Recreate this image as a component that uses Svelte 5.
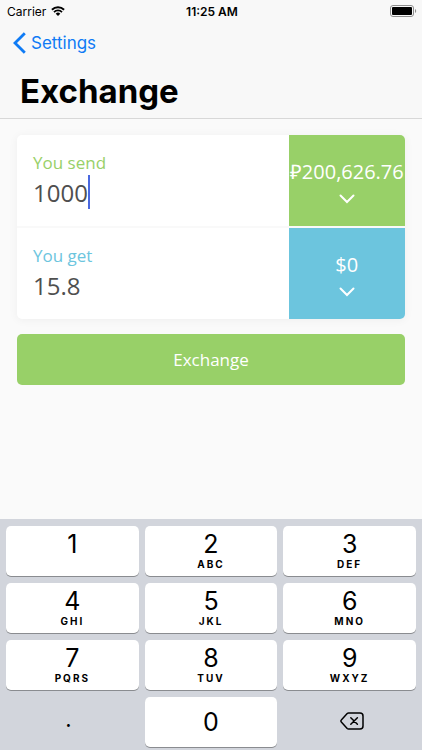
<script>
  let send = $state('1000');
  let get = $state('15.8');

  const keys = [
    { digit: '1', letters: '' },
    { digit: '2', letters: 'ABC' },
    { digit: '3', letters: 'DEF' },
    { digit: '4', letters: 'GHI' },
    { digit: '5', letters: 'JKL' },
    { digit: '6', letters: 'MNO' },
    { digit: '7', letters: 'PQRS' },
    { digit: '8', letters: 'TUV' },
    { digit: '9', letters: 'WXYZ' }
  ];

  function press(char) {
    send += char;
  }

  function backspace() {
    send = send.slice(0, -1);
  }
</script>

<div class="screen">
  <header>
    <div class="status-bar">
      <div class="carrier">
        <span>Carrier</span>
        <svg width="14" height="10" viewBox="0 0 14 10" aria-hidden="true">
          <path d="M0.9 3.8a8.7 8.7 0 0 1 12.2 0" fill="none" stroke="#000" stroke-width="1.9" />
          <path d="M3 6.1a5.7 5.7 0 0 1 8 0" fill="none" stroke="#000" stroke-width="1.8" />
          <path d="M7 10 4.7 7.7a3.3 3.3 0 0 1 4.6 0z" />
        </svg>
      </div>
      <span class="time">11:25 AM</span>
      <div class="battery">
        <svg width="27" height="12" viewBox="0 0 27 12" aria-hidden="true">
          <rect x="0.5" y="0.5" width="23" height="11" rx="2.5" fill="none" stroke="#8e8e8e" />
          <rect x="2" y="2" width="20" height="8" rx="1" />
          <path d="M25 4c1.6 0.6 1.6 3.4 0 4z" fill="#8e8e8e" />
        </svg>
      </div>
    </div>
    <a class="back" href="#settings">
      <svg width="13" height="22" viewBox="0 0 13 22" aria-hidden="true">
        <path d="M11.8 1.2 2 11l9.8 9.8" fill="none" stroke="#0f7bf5" stroke-width="2.8" />
      </svg>
      <span>Settings</span>
    </a>
    <h1>Exchange</h1>
  </header>

  <main>
    <div class="card">
      <div class="row send">
        <div class="field">
          <label for="send">You send</label>
          <div class="amount">
            <input id="send" inputmode="decimal" bind:value={send} style:width="{send.length}ch" />
            <span class="caret"></span>
          </div>
        </div>
        <button class="currency">
          <span>₽200,626.76</span>
          <svg width="16" height="10" viewBox="0 0 16 10" aria-hidden="true">
            <path d="M1.5 1.5 8 8l6.5-6.5" />
          </svg>
        </button>
      </div>
      <div class="row get">
        <div class="field">
          <label for="get">You get</label>
          <div class="amount">
            <input id="get" inputmode="decimal" bind:value={get} />
          </div>
        </div>
        <button class="currency">
          <span>$0</span>
          <svg width="16" height="10" viewBox="0 0 16 10" aria-hidden="true">
            <path d="M1.5 1.5 8 8l6.5-6.5" />
          </svg>
        </button>
      </div>
    </div>
    <button class="submit">Exchange</button>
  </main>

  <div class="keyboard">
    {#each keys as key}
      <button class="key" onclick={() => press(key.digit)}>
        <span class="digit">{key.digit}</span>
        <span class="letters">{key.letters}</span>
      </button>
    {/each}
    <button class="key plain point" onclick={() => press('.')}>.</button>
    <button class="key zero" onclick={() => press('0')}>
      <span class="digit">0</span>
    </button>
    <button class="key plain delete" aria-label="Delete" onclick={backspace}>
      <svg width="24" height="18" viewBox="0 0 24 18" aria-hidden="true">
        <path d="M8.6 1H20a3 3 0 0 1 3 3v10a3 3 0 0 1-3 3H8.6a2 2 0 0 1-1.4-0.6L1.3 10a1.4 1.4 0 0 1 0-2l5.9-6.4A2 2 0 0 1 8.6 1z" />
        <path d="m10.8 5.7 6.6 6.6m0-6.6-6.6 6.6" />
      </svg>
    </button>
  </div>
</div>

<style>
  :global(body) {
    margin: 0;
  }

  .screen {
    display: flex;
    flex-direction: column;
    min-height: 100vh;
    background: #fafafa;
    font-family: Inter, sans-serif;
    color: #000;
  }

  button,
  input {
    margin: 0;
    padding: 0;
    border: none;
    background: none;
    font-family: inherit;
    color: inherit;
  }

  button {
    cursor: pointer;
  }

  header {
    background: #f8f8f8;
    border-bottom: 1px solid #d8d8d8;
  }

  .status-bar {
    display: grid;
    grid-template-columns: 1fr auto 1fr;
    align-items: center;
    height: 22px;
    padding: 0 5px 0 7px;
    font-size: 12px;
  }

  .carrier {
    display: flex;
    align-items: center;
    gap: 5px;
  }

  .time {
    font-weight: 600;
  }

  .battery {
    display: flex;
    justify-content: flex-end;
  }

  .back {
    display: inline-flex;
    align-items: center;
    gap: 5px;
    height: 42px;
    padding-left: 13px;
    font-size: 17px;
    color: #0f7bf5;
    text-decoration: none;
  }

  h1 {
    margin: 0;
    padding: 4px 20px;
    font-size: 33px;
    line-height: 46px;
    font-weight: 700;
  }

  main {
    display: flex;
    flex-direction: column;
    gap: 15px;
    padding: 16px 17px;
    font-family: 'Open Sans', sans-serif;
  }

  .card {
    display: flex;
    flex-direction: column;
    background: #fff;
    border-radius: 5px;
    box-shadow: 0 1px 10px rgba(0, 0, 0, 0.05);
    overflow: hidden;
  }

  .row {
    display: grid;
    grid-template-columns: 7fr 3fr;
    height: 91px;
  }

  .row.get {
    border-top: 2px solid #f9f9f9;
  }

  .field {
    padding: 16px;
  }

  label {
    display: block;
    font-size: 17px;
    line-height: 24px;
  }

  .send label {
    color: #98d068;
  }

  .get label {
    color: #6cc5de;
  }

  .amount {
    display: flex;
    align-items: center;
    height: 34px;
  }

  input {
    width: 100%;
    height: 34px;
    outline: none;
    font-size: 24px;
    color: #4f4f4f;
  }

  .caret {
    width: 2px;
    height: 34px;
    background: #4a68e0;
  }

  .currency {
    display: flex;
    flex-direction: column;
    align-items: center;
    justify-content: center;
    gap: 7px;
    min-width: 0;
    font-size: 20px;
    line-height: 30px;
    color: #fff;
    white-space: nowrap;
  }

  .currency path {
    fill: none;
    stroke: #fff;
    stroke-width: 2;
    stroke-linecap: round;
  }

  .send .currency {
    background: #98d068;
  }

  .get .currency {
    background: #6cc5de;
  }

  .submit {
    height: 51px;
    border-radius: 5px;
    background: #98d068;
    font-size: 17px;
    color: #fff;
  }

  .keyboard {
    display: grid;
    grid-template-columns: repeat(3, 1fr);
    gap: 7px 6px;
    margin-top: auto;
    padding: 7px 6px 3px;
    background: #d2d5dc;
  }

  .key {
    display: flex;
    flex-direction: column;
    align-items: center;
    height: 50px;
    padding-top: 4px;
    border-radius: 5px;
    background: #fff;
    box-shadow: 0 1px 0 #8a8c90;
  }

  .key.zero {
    padding: 0;
    justify-content: center;
  }

  .key.plain {
    padding: 0;
    justify-content: center;
    background: none;
    box-shadow: none;
  }

  .key.point {
    padding: 0 8px 6px 0;
    font-size: 22px;
  }

  .key.delete {
    padding: 0 0 3px 5px;
  }

  .key svg {
    fill: none;
    stroke: #000;
    stroke-width: 1.5;
    stroke-linecap: round;
  }

  .digit {
    font-size: 25px;
    line-height: 28px;
  }

  .letters {
    font-size: 10px;
    line-height: 12px;
    font-weight: 700;
    letter-spacing: 2px;
  }
</style>
